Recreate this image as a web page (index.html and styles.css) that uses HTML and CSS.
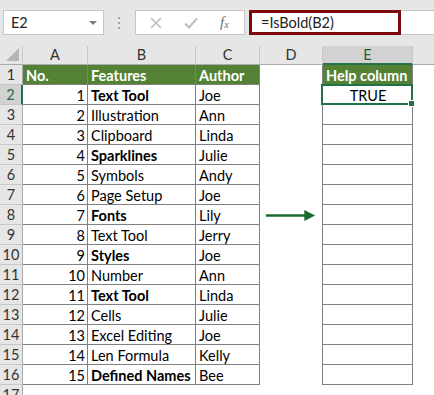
FILE: index.html
```html
<!DOCTYPE html>
<html lang="en">
<head>
    <meta charset="UTF-8">
    <title>IsBold help column</title>
    <link rel="stylesheet" href="styles.css">
</head>
<body>
    <div class="toolbar">
        <div class="namebox">
            <span>E2</span>
            <svg width="8" height="4" viewBox="0 0 8 4"><polygon points="0,0 8,0 4,4" fill="#7a7a7a"/></svg>
        </div>
        <div class="dots">
            <svg width="3" height="12" viewBox="0 0 3 12">
                <rect x="0" y="0" width="2" height="2" fill="#a6a6a6"/>
                <rect x="0" y="5" width="2" height="2" fill="#a6a6a6"/>
                <rect x="0" y="10" width="2" height="2" fill="#a6a6a6"/>
            </svg>
        </div>
        <div class="fxbox">
            <svg class="x-icon" width="12" height="12" viewBox="0 0 12 12"><path d="M1 1 L11 11 M11 1 L1 11" stroke="#bdbdbd" stroke-width="1.6" fill="none"/></svg>
            <svg class="check-icon" width="14" height="12" viewBox="0 0 14 12"><path d="M1 6.5 L5 10.5 L13 1.5" stroke="#bdbdbd" stroke-width="2" fill="none"/></svg>
            <span class="fx">f<sub>x</sub></span>
        </div>
        <div class="formula">
            <div class="formula-text">=IsBold(B2)</div>
        </div>
    </div>

    <div class="sheet" id="sheet"></div>

    <script>
        const sheet = document.getElementById('sheet');
        const rows = [
            [1, 'Text Tool', 'Joe', true],
            [2, 'Illustration', 'Ann', false],
            [3, 'Clipboard', 'Linda', false],
            [4, 'Sparklines', 'Julie', true],
            [5, 'Symbols', 'Andy', false],
            [6, 'Page Setup', 'Joe', false],
            [7, 'Fonts', 'Lily', true],
            [8, 'Text Tool', 'Jerry', false],
            [9, 'Styles', 'Joe', true],
            [10, 'Number', 'Ann', false],
            [11, 'Text Tool', 'Linda', true],
            [12, 'Cells', 'Julie', false],
            [13, 'Excel Editing', 'Joe', false],
            [14, 'Len Formula', 'Kelly', false],
            [15, 'Defined Names', 'Bee', true]
        ];

        function cell(cls, text) {
            const d = document.createElement('div');
            d.className = 'cell ' + cls;
            if (text !== undefined) d.textContent = text;
            sheet.appendChild(d);
            return d;
        }

        // Column headers
        const corner = cell('corner');
        corner.innerHTML = '<svg width="13" height="13" viewBox="0 0 13 13"><polygon points="13,0 13,13 0,13" fill="#b5b5b5"/></svg>';
        ['A', 'B', 'C', 'D'].forEach(l => cell('colhead', l));
        cell('colhead selected', 'E');
        cell('colhead last');

        // Row 1: table headers
        cell('rowhead', '1');
        cell('tcell head', 'No.');
        cell('tcell head', 'Features');
        cell('tcell head', 'Author');
        cell('gap');
        cell('tcell head', 'Help column');
        cell('blank');

        rows.forEach((r, i) => {
            const n = i + 2;
            cell(n === 2 ? 'rowhead selected' : 'rowhead', String(n));
            cell('tcell num', r[0]);
            cell(r[3] ? 'tcell bold' : 'tcell', r[1]);
            cell('tcell', r[2]);
            const d = cell('gap');
            if (n === 8) {
                d.innerHTML = '<svg width="63" height="19" viewBox="0 0 63 19"><line x1="6" y1="9.5" x2="46" y2="9.5" stroke="#186a2e" stroke-width="2.5"/><polygon points="45,4 56,9.5 45,15" fill="#186a2e"/></svg>';
            }
            if (n === 2) {
                cell('tcell center active', 'TRUE');
            } else {
                cell('tcell');
            }
            cell('blank');
        });

        // Row 17, cut off by the window
        cell('rowhead short', '17');
    </script>
</body>
</html>
```

FILE: styles.css
```css
body {
    margin: 0;
    font-family: Lato, "Open Sans", sans-serif;
    font-size: 14.5px;
    color: #000;
    background: #fff;
    overflow: hidden;
}
.toolbar {
    height: 46px;
    box-sizing: border-box;
    padding-top: 10px;
    background: #e6e6e6;
    display: flex;
    align-items: flex-start;
}
.namebox {
    margin-left: 3px;
    width: 101px;
    height: 25px;
    box-sizing: border-box;
    background: #fff;
    border: 1px solid #c6c6c6;
    display: flex;
    align-items: center;
    justify-content: space-between;
    padding: 0 6px 0 7px;
    color: #222;
}
.dots {
    width: 31px;
    height: 25px;
    display: flex;
    align-items: center;
    justify-content: center;
}
.fxbox {
    width: 110px;
    height: 25px;
    box-sizing: border-box;
    background: #fff;
    border: 1px solid #c6c6c6;
    display: flex;
    align-items: center;
    padding-left: 14px;
}
.check-icon {
    margin-left: 22px;
}
.fx {
    margin-left: 22px;
    font-family: "Liberation Serif", serif;
    font-style: italic;
    font-size: 15px;
    color: #6e6e6e;
}
.fx sub {
    font-size: 10px;
    vertical-align: -1px;
}
.formula {
    margin-left: 4px;
    flex: 1;
    height: 25px;
    box-sizing: border-box;
    background: #fff;
    border-top: 1px solid #c6c6c6;
    border-bottom: 1px solid #c6c6c6;
}
.formula-text {
    width: 152px;
    height: 25px;
    margin-top: -1px;
    box-sizing: border-box;
    border: 3px solid #7d0a0a;
    padding-left: 9px;
    display: flex;
    align-items: center;
    color: #222;
}
.sheet {
    display: grid;
    grid-template-columns: 23px 65px 108px 64px 63px 90px 1fr;
    grid-template-rows: 19px repeat(16, 20px) 20px;
}
.cell {
    box-sizing: border-box;
    display: flex;
    align-items: flex-end;
    padding: 0 2px 1px 3px;
    white-space: nowrap;
    overflow: hidden;
    line-height: 14px;
}
.corner {
    background: #e6e6e6;
    border-right: 1px solid #c8c8c8;
    border-bottom: 1px solid #ababab;
    justify-content: flex-end;
    padding: 0 3px 3px 0;
}
.colhead {
    background: #e6e6e6;
    border-right: 1px solid #c8c8c8;
    border-bottom: 1px solid #ababab;
    justify-content: center;
    align-items: center;
    padding: 0;
    color: #333;
}
.colhead.selected {
    background: #d2d2d2;
    border-bottom: 2px solid #217346;
    color: #1e5e38;
}
.colhead.last {
    border-right: none;
}
.rowhead {
    background: #e6e6e6;
    border-right: 1px solid #ababab;
    border-bottom: 1px solid #c8c8c8;
    justify-content: center;
    align-items: center;
    padding: 0;
    color: #333;
}
.rowhead.selected {
    background: #d2d2d2;
    border-right: 2px solid #217346;
    color: #1e6b3e;
}
.tcell {
    border-right: 1px solid #808080;
    border-bottom: 1px solid #808080;
}
.tcell.head {
    background: #548235;
    color: #fff;
    font-weight: bold;
}
.tcell.num {
    justify-content: flex-end;
}
.tcell.bold {
    font-weight: bold;
}
.tcell.center {
    justify-content: center;
}
.tcell.active {
    position: relative;
    overflow: visible;
}
.tcell.active::before {
    content: "";
    position: absolute;
    left: -2px;
    top: -1px;
    right: -1px;
    bottom: -1px;
    border: 2px solid #217346;
}
.tcell.active::after {
    content: "";
    position: absolute;
    right: -3px;
    bottom: -3px;
    width: 5px;
    height: 5px;
    background: #217346;
    border: 1px solid #fff;
}
.gap {
    border-right: 1px solid #808080;
    padding: 0;
    align-items: center;
}
.short {
    height: 20px;
}
```
